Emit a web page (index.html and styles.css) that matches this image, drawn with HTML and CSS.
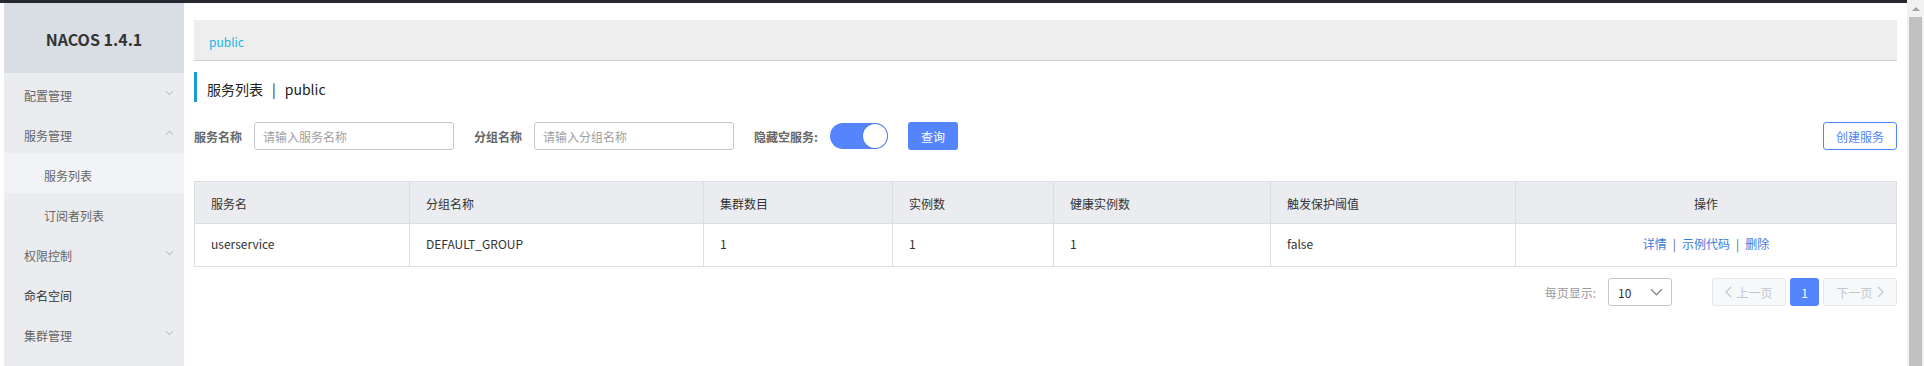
FILE: index.html
```html
<!DOCTYPE html>
<html lang="zh-CN">
<head>
<meta charset="utf-8">
<title>Nacos</title>
<link rel="stylesheet" href="styles.css">
</head>
<body>
<div class="topbar"></div>
<div class="layout">
  <div class="gutter"></div>
  <aside class="sidebar">
    <div class="logo">NACOS 1.4.1</div>
    <ul class="menu">
      <li class="menu-item"><span>配置管理</span><svg class="chev" viewBox="0 0 10 6"><path d="M1 1l4 4 4-4"/></svg></li>
      <li class="menu-item"><span>服务管理</span><svg class="chev" viewBox="0 0 10 6"><path d="M1 5l4-4 4 4"/></svg></li>
      <li class="menu-item sub active"><span>服务列表</span></li>
      <li class="menu-item sub"><span>订阅者列表</span></li>
      <li class="menu-item"><span>权限控制</span><svg class="chev" viewBox="0 0 10 6"><path d="M1 1l4 4 4-4"/></svg></li>
      <li class="menu-item leaf"><span>命名空间</span></li>
      <li class="menu-item"><span>集群管理</span><svg class="chev" viewBox="0 0 10 6"><path d="M1 1l4 4 4-4"/></svg></li>
    </ul>
  </aside>
  <main class="main">
    <div class="crumb"><span class="ns">public</span></div>
    <div class="title">服务列表<span class="sep">|</span>public</div>
    <div class="filters">
      <label class="flabel">服务名称</label>
      <div class="input"><span class="ph">请输入服务名称</span></div>
      <label class="flabel gapl">分组名称</label>
      <div class="input"><span class="ph">请输入分组名称</span></div>
      <label class="flabel gapl">隐藏空服务:</label>
      <div class="switch"><span class="knob"></span></div>
      <button class="btn primary">查询</button>
      <div class="spacer"></div>
      <button class="btn outline">创建服务</button>
    </div>
    <table class="grid">
      <colgroup>
        <col style="width:215px"><col style="width:294px"><col style="width:189px"><col style="width:161px"><col style="width:217px"><col style="width:245px"><col>
      </colgroup>
      <thead>
        <tr><th>服务名</th><th>分组名称</th><th>集群数目</th><th>实例数</th><th>健康实例数</th><th>触发保护阈值</th><th class="center">操作</th></tr>
      </thead>
      <tbody>
        <tr><td>userservice</td><td>DEFAULT_GROUP</td><td>1</td><td>1</td><td>1</td><td>false</td>
          <td class="center"><a class="link">详情</a><span class="lsep">|</span><a class="link">示例代码</a><span class="lsep">|</span><a class="link">删除</a></td></tr>
      </tbody>
    </table>
    <div class="pager">
      <span class="psize">每页显示:</span>
      <div class="select"><span>10</span><svg class="schev" viewBox="0 0 12 7"><path d="M1 1l5 5 5-5"/></svg></div>
      <div class="pbtn disabled prev"><svg class="pchev" viewBox="0 0 7 12"><path d="M6 1L1 6l5 5"/></svg>上一页</div>
      <div class="pbtn current">1</div>
      <div class="pbtn disabled next">下一页<svg class="pchev" viewBox="0 0 7 12"><path d="M1 1l5 5-5 5"/></svg></div>
    </div>
  </main>
  <div class="scrollbar">
    <div class="sb-arrow"><svg viewBox="0 0 8 5"><path d="M0 5L4 1l4 4z"/></svg></div>
    <div class="sb-thumb"></div>
  </div>
</div>
</body>
</html>
```
FILE: styles.css
```css
* { box-sizing: border-box; }
html, body { margin: 0; padding: 0; height: 100%; overflow: hidden; }
body {
  font-family: "Noto Sans CJK SC", "Noto Sans", sans-serif;
  font-size: 12px;
  color: #333;
  background: #fff;
}
.topbar { height: 3px; background: #25292f; }
.layout { display: flex; height: 363px; }
.gutter { width: 4px; flex: none; }
.sidebar { width: 180px; flex: none; background: #eaecf0; }
.logo {
  height: 70px;
  background: #d9dde4;
  display: flex; align-items: center; justify-content: center;
  font-weight: bold; font-size: 16px; color: #333;
  padding-top: 1px;
}
.menu { list-style: none; margin: 0; padding: 0; }
.menu-item {
  height: 40px;
  display: flex; align-items: center; justify-content: space-between;
  padding: 5px 10px 0 20px;
  color: #666; font-size: 12px;
}
.menu-item.sub { padding-left: 40px; }
.menu-item.active { background: #f2f3f6; }
.menu-item.leaf { color: #333; }
.chev { width: 9px; height: 6px; fill: none; stroke: #a3a6ad; stroke-width: 1; margin-top: -6px; }
.main { flex: 1; margin-left: 10px; padding-top: 17px; }
.crumb {
  height: 41px;
  background: #eeeeee;
  border-bottom: 1px solid #cfcfcf;
  display: flex; align-items: center;
  padding: 2px 0 0 15px;
}
.ns { color: #1cb4e3; font-size: 12px; }
.title {
  margin-top: 11px;
  height: 30px;
  border-left: 3px solid #1f9bd4;
  padding: 5px 0 0 10px;
  line-height: 24px;
  font-size: 14px; color: #222;
}
.sep { margin: 0 9px 0 9px; }
.filters {
  margin-top: 20px;
  display: flex; align-items: center;
  height: 28px;
}
.flabel { font-weight: bold; color: #666; font-size: 12px; margin-right: 12px; }
.flabel.gapl { margin-left: 20px; }
.input {
  width: 200px; height: 28px;
  border: 1px solid #c4c6cf; border-radius: 3px;
  display: flex; align-items: center; padding-left: 8px;
}
.ph { color: #a0a0a0; font-size: 12px; }
.switch {
  width: 58px; height: 26px; border-radius: 13px;
  background: #5584ff;
  display: flex; align-items: center; justify-content: flex-end;
  padding-right: 1px;
}
.knob { width: 24px; height: 24px; border-radius: 50%; background: #fff; box-shadow: 0 0 0 1px rgba(60,90,200,0.25); }
.btn {
  height: 28px; border-radius: 3px; font-family: inherit; font-size: 12px;
  padding: 0; cursor: pointer;
}
.btn.primary { width: 50px; margin-left: 20px; background: #5584ff; border: none; color: #fff; }
.btn.outline { width: 74px; background: #fff; border: 1px solid #5584ff; color: #5584ff; }
.spacer { flex: 1; }
.grid {
  margin-top: 31px;
  width: 100%;
  border-collapse: collapse;
  table-layout: fixed;
  border: 1px solid #dcdee3;
}
.grid th, .grid td {
  border: 1px solid #dcdee3;
  text-align: left;
  padding: 0 16px;
  font-weight: normal;
  font-size: 12px;
  color: #333;
}
.grid th { background: #ebecf0; height: 42px; padding-top: 2px; }
.grid td { height: 43px; padding-bottom: 3px; }
.grid .center { text-align: center; }
.link { color: #3b7bd8; font-size: 12px; }
.lsep { color: #666; margin: 0 6px; }
.pager {
  margin-top: 11px;
  display: flex; align-items: center; justify-content: flex-end;
  height: 28px;
}
.psize { color: #999; font-size: 12px; margin-right: 12px; }
.select {
  width: 64px; height: 28px;
  border: 1px solid #c4c6cf; border-radius: 3px;
  display: flex; align-items: center; justify-content: space-between;
  padding: 0 8px 0 9px; font-size: 12px; color: #333;
}
.schev { width: 13px; height: 8px; fill: none; stroke: #888; stroke-width: 1.2; }
.pbtn {
  height: 28px; border-radius: 3px;
  display: flex; align-items: center; justify-content: center;
  font-size: 12px;
}
.pbtn.prev { margin-left: 40px; width: 74px; }
.pbtn.next { width: 74px; }
.pbtn.disabled { background: #f7f8fa; border: 1px solid #e6e7eb; color: #c4c6cf; gap: 4px; }
.pbtn.current { width: 29px; margin: 0 4px; background: #5584ff; color: #fff; }
.pchev { width: 7px; height: 12px; fill: none; stroke: #c4c6cf; stroke-width: 1.2; }
.scrollbar {
  width: 17px; flex: none; margin-left: 10px; margin-top: -3px; height: 366px;
  background: #f1f1f1;
  display: flex; flex-direction: column;
}
.sb-arrow { height: 17px; display: flex; align-items: center; justify-content: center; }
.sb-arrow svg { width: 8px; height: 5px; fill: #a3a3a3; }
.sb-thumb { flex: 1; margin: 0 2px; background: #c1c1c1; }
```
